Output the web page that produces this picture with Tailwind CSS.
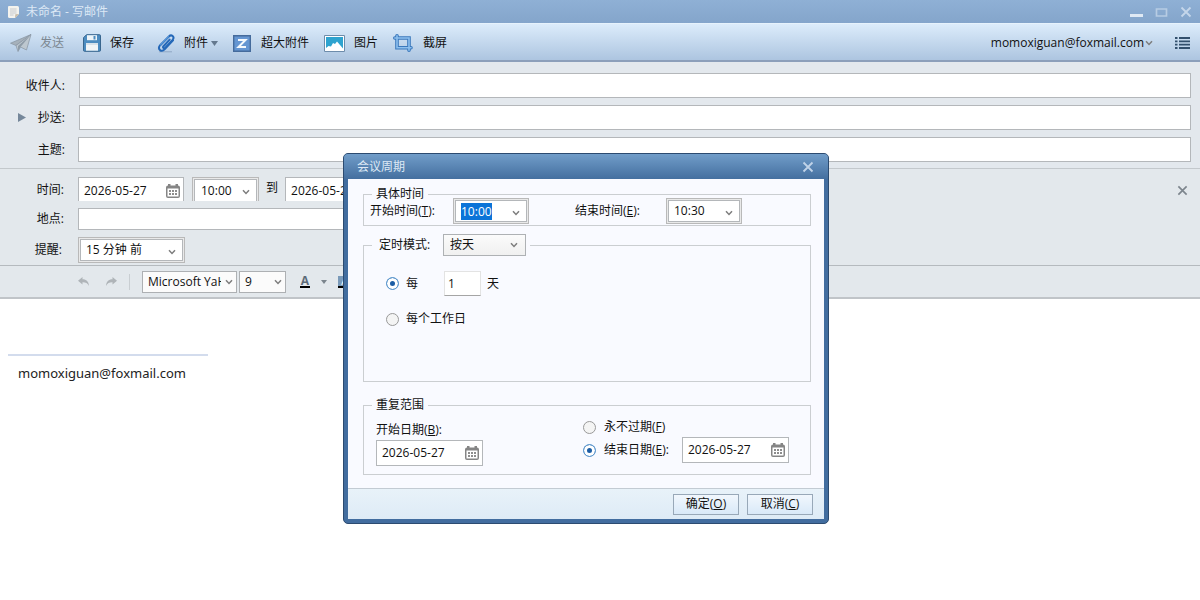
<!DOCTYPE html>
<html lang="zh-CN">
  <head>
    <meta charset="UTF-8" />
    <meta name="viewport" content="width=device-width, initial-scale=1.0" />
    <title>未命名 - 写邮件</title>
    <script src="https://cdn.jsdelivr.net/npm/@tailwindcss/browser@4"></script>
  </head>
  <body class="relative flex flex-col min-h-screen bg-white text-[12px] leading-4 text-[#111] font-['Open_Sans','Noto_Sans_CJK_SC',sans-serif]">
    <svg class="hidden">
      <symbol id="chevron" viewBox="0 0 8 6">
        <path d="M1 1.2 4 4.4 7 1.2" fill="none" stroke="#7d7d7d" stroke-width="1.5" />
      </symbol>
      <symbol id="calendar" viewBox="0 0 14 14">
        <path d="M2 0h2.500v1.500h5V0H12v1.500a2 2 0 0 1 2 2V12a2 2 0 0 1-2 2H2a2 2 0 0 1-2-2V3.500a2 2 0 0 1 2-2z" fill="#858585" />
        <path d="M1.500 4.500h11v8h-11z" fill="#fff" />
        <path d="M3 6h2v2H3zM6 6h2v2H6zM9 6h2v2H9zM3 9h2v2H3zM6 9h2v2H6zM9 9h2v2H9z" fill="#8d8d8d" />
      </symbol>
      <symbol id="close" viewBox="0 0 12 12">
        <path d="M1.500 1.500 10.500 10.500M10.500 1.500 1.500 10.500" fill="none" stroke="currentColor" stroke-width="1.8" />
      </symbol>
    </svg>

    <!-- title bar -->
    <header class="flex items-center h-[23px] pl-[7px] pr-2 bg-linear-to-b from-[#8fb0d5] to-[#84a5cb] text-[#dce8f5]">
      <svg class="w-3 h-3 mr-[7px]" viewBox="0 0 12 12">
        <path d="M1.500 0h9A1.500 1.500 0 0 1 12 1.500V8l-4 4H2.500A1.500 1.500 0 0 1 1 10.500V1z" fill="#f4f3ee" />
        <path d="M3 3h6.500M3 5h6.500M3 7h6.500M3 9h3.500" stroke="#c2c6ca" stroke-width=".9" />
        <path d="m8 12 .3-3.700L12 8z" fill="#c9bca8" />
      </svg>
      <h1 class="text-[12px] leading-4">未命名 - 写邮件</h1>
      <div class="flex items-center gap-3 ml-auto">
        <button aria-label="最小化"><svg class="w-[13px] h-3" viewBox="0 0 13 12"><path d="M0 8h13v3H0z" fill="#dfe9f4" /></svg></button>
        <button aria-label="最大化"><svg class="w-[13px] h-3" viewBox="0 0 13 12"><path d="M1.500 3h10v7h-10z" fill="none" stroke="#b7cce3" stroke-width="1.700" /></svg></button>
        <button aria-label="关闭" class="text-[#c5d6ea]"><svg class="w-3 h-3"><use href="#close" /></svg></button>
      </div>
    </header>

    <!-- toolbar -->
    <nav class="flex items-center gap-[15px] h-[39px] pt-[2px] pl-[10px] pr-[10px] bg-linear-to-b from-[#dcecfb] to-[#adc5e0] border-t border-t-[#e6f2fc] border-b-2 border-b-[#8c9fba]">
      <button class="flex items-center gap-2 mr-1 text-[#7c8791]">
        <svg class="w-[22px] h-[19px]" viewBox="0 0 22 19">
          <path d="M21 .5.5 9.200 6 11.500z" fill="#a6b1bb" stroke="#8794a0" stroke-width=".7" />
          <path d="M21 .5 6 11.500l2 6L10.500 13l6 3z" fill="#bdc7cf" stroke="#8794a0" stroke-width=".7" />
          <path d="M21 .5 10.500 13 8 17.500V12z" fill="#8e9ba7" />
        </svg>
        发送
      </button>
      <button class="flex items-center gap-[9px] mr-2">
        <svg class="w-[18px] h-[18px]" viewBox="0 0 18 18">
          <path d="M3.500.7h13a1 1 0 0 1 1 1v14.600a1 1 0 0 1-1 1h-15a1 1 0 0 1-1-1V3.700z" fill="#4d8cc0" stroke="#39668e" />
          <path d="M4 1.200h10v5H4z" fill="#eef4f8" />
          <path d="M10.500 2h2v3.500h-2z" fill="#4d8cc0" />
          <path d="M3 9h12v7.700H3z" fill="#f2f5f7" />
          <path d="M3 9h12v2H3z" fill="#d8e2ea" />
        </svg>
        保存
      </button>
      <button class="flex items-center gap-[9px]">
        <svg class="w-[18px] h-[19px]" viewBox="0 0 18 19">
          <path d="M2 17.800h13" stroke="#8fa7c4" stroke-width="1" />
          <path d="m12.600 5.600-6.100 6.600c-1.200 1.400.6 2.900 1.800 1.600l7.300-8c2.500-3-1.200-5.900-3.700-3.300L3.200 11.200c-3.200 3.700 1.100 7.500 4.400 4.200l8.400-9" fill="none" stroke="#2468b8" stroke-width="2" stroke-linecap="round" />
          <path d="M11.900 2.500 3.200 11.200" stroke="#7dbaf2" stroke-width=".9" />
        </svg>
        附件
        <svg class="w-[7px] h-[5px] -ml-[6px]" viewBox="0 0 7 5"><path d="M0 0h7L3.500 5z" fill="#64788e" /></svg>
      </button>
      <button class="flex items-center gap-[10px]">
        <svg class="w-[18px] h-[17px]" viewBox="0 0 18 17">
          <path d="M.7.700h16.600v15.600H.7z" fill="#6596d2" stroke="#456b9c" stroke-width="1.400" />
          <path d="M5 5h7.500L5.500 12H13" fill="none" stroke="#f5f9fd" stroke-width="2" />
        </svg>
        超大附件
      </button>
      <button class="flex items-center gap-[9px]">
        <svg class="w-[21px] h-[17px]" viewBox="0 0 21 17">
          <path d="M.5.5h20v16H.5z" fill="#fff" stroke="#6d8cab" />
          <path d="M2 2h17v13H2z" fill="#2ea3cf" />
          <path d="M2 13l2.500-2L7 11.500 9 8l2 1 2-2.500 3 3.500 3 3.500V15H2z" fill="#fff" />
        </svg>
        图片
      </button>
      <button class="flex items-center gap-[10px]">
        <svg class="w-5 h-[18px]" viewBox="0 0 20 18">
          <path d="M4 1.800v12h12M1.800 4h14.200v12.200M16 13.800h2" fill="none" stroke="#3a78bc" stroke-width="3.600" stroke-linecap="round" />
          <path d="M4 1.800v12h12M1.800 4h14.200v12.200M16 13.800h2" fill="none" stroke="#8ec0ee" stroke-width="1.600" stroke-linecap="round" />
        </svg>
        截屏
      </button>
      <button class="flex items-center gap-px ml-auto">
        momoxiguan@foxmail.com
        <svg class="w-2 h-[6px]"><use href="#chevron" /></svg>
      </button>
      <button aria-label="菜单" class="ml-[7px]">
        <svg class="w-[15px] h-3" viewBox="0 0 15 12">
          <path d="M0 1h2.500M4 1h11M0 4.300h2.500M4 4.300h11M0 7.600h2.500M4 7.600h11M0 11h2.500M4 11h11" stroke="#33506d" stroke-width="1.800" />
        </svg>
      </button>
    </nav>

    <!-- recipients -->
    <section class="flex flex-col gap-[7px] pt-[11px] pb-[6px] pr-[9px] bg-[#e3e8ed] border-b border-[#c3c8cc]">
      <div class="flex items-center">
        <label for="to" class="w-[65px] mr-[14px] text-right">收件人:</label>
        <input id="to" type="text" class="flex-1 h-[25px] px-1 bg-white border border-[#b4b7ba] outline-none" />
      </div>
      <div class="flex items-center">
        <button aria-label="展开" class="w-[26px] pl-[18px]"><svg class="w-2 h-[9px]" viewBox="0 0 8 9"><path d="M0 0v9l8-4.500z" fill="#75879a" /></svg></button>
        <label for="cc" class="w-[39px] mr-[14px] text-right">抄送:</label>
        <input id="cc" type="text" class="flex-1 h-[25px] px-1 bg-white border border-[#b4b7ba] outline-none" />
      </div>
      <div class="flex items-center">
        <label for="subject" class="w-[65px] mr-[13px] text-right">主题:</label>
        <input id="subject" type="text" class="flex-1 h-[25px] px-1 bg-white border border-[#b4b7ba] outline-none" />
      </div>
    </section>

    <!-- meeting -->
    <section class="relative flex flex-col gap-[7px] pt-2 pb-[2px] bg-[#e3e8ec] border-b border-[#b5babe]">
      <div class="flex items-start h-6 overflow-hidden">
        <label for="date-from" class="w-[64px] mr-[14px] pt-[5px] text-right">时间:</label>
        <div class="flex items-center shrink-0 w-[106px] h-[27px] px-[5px] bg-white border border-[#b4b7ba]">
          <input id="date-from" type="text" value="2026-05-27" class="w-full outline-none" />
          <svg class="shrink-0 w-[14px] h-[14px] mr-[-2px]"><use href="#calendar" /></svg>
        </div>
        <div class="relative shrink-0 w-[67px] ml-2 p-px bg-[#e9e9e9] border border-[#b9b9b9]">
          <select aria-label="开始时间" class="block w-full h-6 px-[6px] appearance-none bg-white border border-[#b4b7ba] outline-none"><option>10:00</option></select>
          <svg class="absolute right-2 top-[11px] w-2 h-[6px] pointer-events-none"><use href="#chevron" /></svg>
        </div>
        <label for="date-to" class="mx-[7px] pt-[3px]">到</label>
        <div class="flex items-center shrink-0 w-[106px] h-[27px] px-[5px] bg-white border border-[#b4b7ba]">
          <input id="date-to" type="text" value="2026-05-27" class="w-full outline-none" />
          <svg class="shrink-0 w-[14px] h-[14px]"><use href="#calendar" /></svg>
        </div>
      </div>
      <div class="flex items-center">
        <label for="place" class="w-[64px] mr-[14px] text-right">地点:</label>
        <input id="place" type="text" class="w-[480px] h-[22px] px-1 bg-white border border-[#b4b7ba] outline-none" />
      </div>
      <div class="flex items-center">
        <label for="remind" class="w-[62px] mr-4 text-right">提醒:</label>
        <div class="relative w-[107px] p-px bg-[#e9e9e9] border border-[#b9b9b9]">
          <select id="remind" class="block w-full h-[22px] px-[5px] appearance-none bg-white border border-[#b4b7ba] outline-none"><option>15 分钟 前</option></select>
          <svg class="absolute right-2 top-[11px] w-2 h-[6px] pointer-events-none"><use href="#chevron" /></svg>
        </div>
      </div>
      <button aria-label="移除会议" class="absolute right-3 top-4 text-[#7d858d]"><svg class="block w-[11px] h-[11px]"><use href="#close" /></svg></button>
    </section>

    <!-- text format -->
    <div class="flex items-center h-[33px] pl-[78px] bg-[#e3e8ec] border-b-2 border-[#c0c4c8]">
      <button aria-label="撤销"><svg class="block w-[11px] h-[9px]" viewBox="0 0 11 9"><path d="M4.500 0v2.200C8.500 2.200 10.700 4.500 11 9 9.500 6 7.500 5.200 4.500 5.300V7.500L0 3.800z" fill="#afb4b8" /></svg></button>
      <button aria-label="重做" class="ml-[17px]"><svg class="block w-[11px] h-[9px]" viewBox="0 0 11 9"><path d="M6.500 0v2.200C2.500 2.200.3 4.500 0 9 1.500 6 3.500 5.200 6.500 5.300V7.500L11 3.800z" fill="#afb4b8" /></svg></button>
      <span class="w-px h-4 mx-3 bg-[#c9ced2]"></span>
      <div class="relative w-[95px]">
        <select aria-label="字体" class="block w-full h-[22px] pl-[5px] pr-[15px] appearance-none bg-[#fbfbfb] border border-[#adb0b3] outline-none"><option>Microsoft YaHei UI</option></select>
        <svg class="absolute right-1 top-2 w-2 h-[6px] pointer-events-none"><use href="#chevron" /></svg>
      </div>
      <div class="relative w-[47px] ml-[2px]">
        <select aria-label="字号" class="block w-full h-[22px] px-[5px] appearance-none bg-[#fbfbfb] border border-[#adb0b3] outline-none"><option>9</option></select>
        <svg class="absolute right-1 top-2 w-2 h-[6px] pointer-events-none"><use href="#chevron" /></svg>
      </div>
      <button aria-label="文字颜色" class="ml-[14px] w-[10px] h-[13px] border-b-2 border-black leading-[10px] font-bold text-[#5c6b78]">A</button>
      <svg class="w-[6px] h-1 ml-[11px]" viewBox="0 0 6 4"><path d="M0 0h6L3 4z" fill="#7b858d" /></svg>
      <button aria-label="背景颜色" class="ml-[11px] w-[13px] h-[12px] border-b-2 border-black bg-[#7a9ab9] leading-[10px] text-[10px] text-white">A</button>
    </div>

    <!-- message body -->
    <main class="flex-1 pt-[55px] pl-2">
      <div class="w-[200px] pt-[9px] pl-[10px] border-t-2 border-[#d3dced] text-[13px] text-[#222] font-['Noto_Sans',sans-serif]">momoxiguan@foxmail.com</div>
    </main>

    <!-- recurrence dialog -->
    <form role="dialog" aria-labelledby="dialog-title" class="absolute left-[343px] top-[153px] w-[486px] px-1 pb-1 rounded-[5px] border border-[#2c4b70] bg-[#426d9f] overflow-hidden">
      <div class="flex items-center h-[25px] -mx-1 pl-[13px] pr-[14px] bg-linear-to-b from-[#719dc9] to-[#446f9f] text-[#dce8f5]">
        <h2 id="dialog-title">会议周期</h2>
        <button type="button" aria-label="关闭" class="ml-auto text-[#c0d3e8]"><svg class="block w-3 h-3"><use href="#close" /></svg></button>
      </div>

      <div class="pl-[15px] pr-[13px] pt-[11px] pb-[13px] bg-[#f9faff]">
        <fieldset class="h-9 border border-[#cbced1]">
          <legend class="ml-2 px-1 h-2 leading-2">具体时间</legend>
          <div class="flex items-center pl-[6px]">
            <label for="start-time" class="w-[83px]">开始时间(<u>T</u>):</label>
            <div class="relative w-[76px] p-px bg-[#e9e9e9] border border-[#b9b9b9]">
              <input id="start-time" type="text" value="10:00" class="block w-full h-[22px] bg-white border border-[#b4b7ba] pl-[5px] outline-none selection:bg-[#0b74d8] selection:text-white" />
              <svg class="absolute right-2 top-[11px] w-2 h-[6px]"><use href="#chevron" /></svg>
            </div>
            <label for="end-time" class="w-[91px] ml-[46px]">结束时间(<u>E</u>):</label>
            <div class="relative w-[76px] p-px bg-[#e9e9e9] border border-[#b9b9b9]">
              <select id="end-time" class="block w-full h-[22px] px-[5px] appearance-none bg-white border border-[#b4b7ba] outline-none"><option>10:30</option></select>
              <svg class="absolute right-2 top-[11px] w-2 h-[6px] pointer-events-none"><use href="#chevron" /></svg>
            </div>
          </div>
        </fieldset>

        <fieldset class="h-[148px] mt-2 border border-[#cbced1]">
          <legend class="ml-2 pl-[7px] pr-1">
            <span class="flex items-center">
              <label for="mode" class="w-16">定时模式:</label>
              <span class="relative w-[83px]">
                <select id="mode" class="block w-full h-[22px] px-[6px] appearance-none bg-linear-to-b from-[#fbfbfb] to-[#f0f0f0] border border-[#aeb1b4] outline-none"><option>按天</option></select>
                <svg class="absolute right-2 top-2 w-2 h-[6px] pointer-events-none"><use href="#chevron" /></svg>
              </span>
            </span>
          </legend>
          <div class="flex items-center pt-[15px] pl-[22px]">
            <input id="every" type="radio" name="mode" checked class="w-[13px] h-[13px] mr-[7px] appearance-none rounded-full border border-[#999] bg-[#f4f4f4] checked:border-[#5f9bd1] checked:bg-[#1c5da5] checked:shadow-[inset_0_0_0_3px_#fff]" />
            <label for="every" class="w-[38px]">每</label>
            <input aria-label="天数" type="text" value="1" class="w-[37px] h-[25px] px-[3px] bg-white border border-[#e3e3e3] border-b-[#a5a5a5] outline-none" />
            <span class="ml-[6px]">天</span>
          </div>
          <div class="flex items-center pt-[15px] pl-[22px]">
            <input id="workday" type="radio" name="mode" class="w-[13px] h-[13px] mr-[7px] appearance-none rounded-full border border-[#999] bg-[#f4f4f4] checked:border-[#5f9bd1] checked:bg-[#1c5da5] checked:shadow-[inset_0_0_0_3px_#fff]" />
            <label for="workday">每个工作日</label>
          </div>
        </fieldset>

        <fieldset class="h-[74px] mt-[19px] border border-[#cbced1]">
          <legend class="ml-2 px-1 h-2 leading-2">重复范围</legend>
          <div class="flex pl-3">
            <div class="flex flex-col gap-[2px] w-[207px] pt-[13px]">
              <label for="start-date">开始日期(<u>B</u>):</label>
              <div class="flex items-center w-[107px] h-[26px] px-[5px] bg-white border border-[#b4b7ba]">
                <input id="start-date" type="text" value="2026-05-27" class="w-full outline-none" />
                <svg class="shrink-0 w-[14px] h-[14px] mr-[-2px]"><use href="#calendar" /></svg>
              </div>
            </div>
            <div class="pt-[10px]">
              <div class="flex items-center h-4">
                <input id="never" type="radio" name="range" class="w-[13px] h-[13px] mr-2 appearance-none rounded-full border border-[#999] bg-[#f4f4f4] checked:border-[#5f9bd1] checked:bg-[#1c5da5] checked:shadow-[inset_0_0_0_3px_#fff]" />
                <label for="never">永不过期(<u>F</u>)</label>
              </div>
              <div class="flex items-center mt-[2px]">
                <input id="until" type="radio" name="range" checked class="w-[13px] h-[13px] mr-2 appearance-none rounded-full border border-[#999] bg-[#f4f4f4] checked:border-[#5f9bd1] checked:bg-[#1c5da5] checked:shadow-[inset_0_0_0_3px_#fff]" />
                <label for="until" class="w-[78px]">结束日期(<u>E</u>):</label>
                <div class="flex items-center w-[107px] h-[26px] px-[5px] bg-white border border-[#b4b7ba]">
                  <input aria-label="结束日期" type="text" value="2026-05-27" class="w-full outline-none" />
                  <svg class="shrink-0 w-[14px] h-[14px] mr-[-2px]"><use href="#calendar" /></svg>
                </div>
              </div>
            </div>
          </div>
        </fieldset>
      </div>

      <div class="flex items-center justify-end gap-2 h-[31px] pr-[11px] border-t border-[#c3cbd3] bg-linear-to-b from-[#e8f2f9] to-[#deebf6]">
        <button type="submit" class="w-[66px] h-[21px] border border-[#98a8b8] bg-linear-to-b from-[#f1f7fd] to-[#d9e9f8]">确定(<u>O</u>)</button>
        <button type="button" class="w-[66px] h-[21px] border border-[#98a8b8] bg-linear-to-b from-[#f1f7fd] to-[#d9e9f8]">取消(<u>C</u>)</button>
      </div>
    </form>
  </body>

  <script>
    const startTime = document.querySelector("#start-time");
    startTime.focus();
    startTime.select();
  </script>
</html>
